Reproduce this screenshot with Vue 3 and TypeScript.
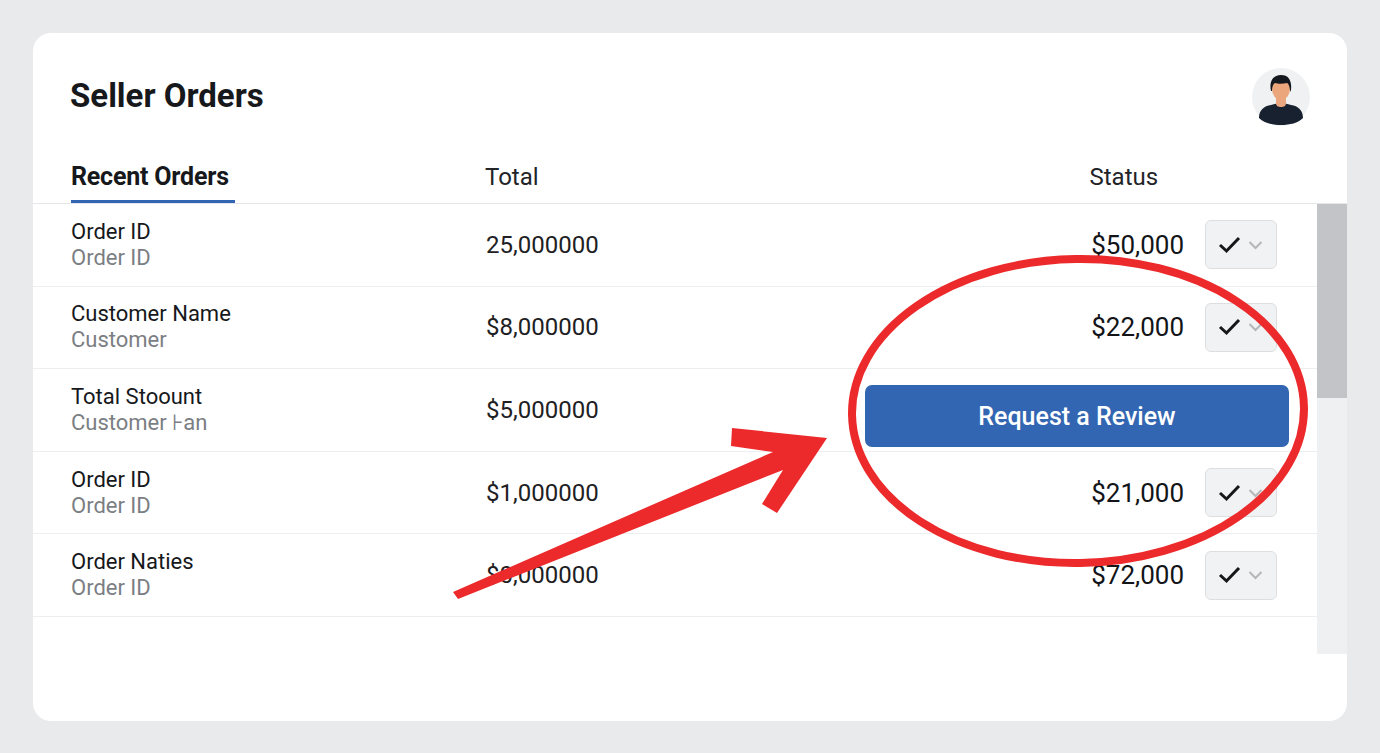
<script setup lang="ts">
interface Row { name: string; sub: string; total: string; amount?: string; cta?: boolean }
const rows: Row[] = [
  { name: 'Order ID', sub: 'Order ID', total: '25,000000', amount: '$50,000' },
  { name: 'Customer Name', sub: 'Customer', total: '$8,000000', amount: '$22,000' },
  { name: 'Total Stoount', sub: 'Customer ⊦an', total: '$5,000000', cta: true },
  { name: 'Order ID', sub: 'Order ID', total: '$1,000000', amount: '$21,000' },
  { name: 'Order Naties', sub: 'Order ID', total: '$0,000000', amount: '$72,000' },
]
</script>

<template>
  <div class="page">
    <main class="card">
      <header class="top">
        <h1>Seller Orders</h1>
        <svg class="avatar" viewBox="0 0 58 58" aria-hidden="true">
          <circle cx="29" cy="29" r="29" fill="#f0f1f2" />
          <path d="M7 50c0-8 5-12 12-13 4-1 6-2 10-2s6 1 10 2c7 1 12 5 12 13-5 5-13 7-22 7S12 55 7 50z" fill="#17212f" />
          <path d="M24 29h10v6c0 3-2 4-5 4s-5-1-5-4z" fill="#e9a67f" />
          <ellipse cx="29" cy="21" rx="9" ry="11" fill="#eba67c" />
          <path d="M19 23c-2-8 1-16 10-16 8 0 11 6 10 15l-1 2c0-4-1-8-3-9-4 1-9 1-12 0-2 1-3 4-3 8z" fill="#14181f" />
        </svg>
      </header>

      <div class="tabs">
        <div class="tab">Recent Orders</div>
        <div class="col">Total</div>
        <div class="col status">Status</div>
      </div>

      <div class="body">
        <div class="list">
          <div v-for="row in rows" :key="row.name + row.total" class="row">
            <div class="who">
              <div class="name">{{ row.name }}</div>
              <div class="sub">{{ row.sub }}</div>
            </div>
            <div class="total">{{ row.total }}</div>
            <button v-if="row.cta" class="cta" type="button">Request a Review</button>
            <div v-else class="end">
              <span class="amount">{{ row.amount }}</span>
              <span class="pick">
                <svg width="24" height="20" viewBox="0 0 24 20" aria-hidden="true"><path d="M2 10l6.500 6L21 3" fill="none" stroke="#15171a" stroke-width="3" /></svg>
                <svg width="15" height="10" viewBox="0 0 15 10" aria-hidden="true"><path d="M1.500 2l6 6 6-6" fill="none" stroke="#b4b6b8" stroke-width="2" /></svg>
              </span>
            </div>
          </div>
        </div>
        <div class="scroll"><div class="thumb"></div></div>
      </div>

      <svg class="mark" viewBox="0 0 1380 753" aria-hidden="true">
        <ellipse cx="1078" cy="411" rx="226" ry="152" fill="none" stroke="#ec2a2b" stroke-width="8" transform="rotate(-1 1078 411)" />
        <polygon points="453,592 773,452 731,446 732,428 827,438 777,513 762,504 783,470 458,599" fill="#ec2a2b" />
      </svg>
    </main>
  </div>
</template>

<style>
body { margin: 0; background: #e9eaec; }
</style>

<style scoped>
.page {
  box-sizing: border-box;
  height: 753px;
  padding: 33px;
  font-family: Roboto, "Liberation Sans", sans-serif;
  color: #16181b;
  overflow: hidden;
}
.card {
  position: relative;
  height: 688px;
  background: #fff;
  border-radius: 18px;
  overflow: hidden;
}
.top {
  display: flex;
  justify-content: space-between;
  align-items: center;
  height: 128px;
  padding: 0 37px 0 37px;
  box-sizing: border-box;
}
h1 { margin: 0; font-size: 33px; font-weight: 700; position: relative; top: -2px; }
.avatar { width: 58px; height: 58px; margin-right: 0; }
.tabs {
  display: grid;
  grid-template-columns: 414px 604.5px 1fr;
  height: 42px;
  padding-left: 38px;
  border-bottom: 1px solid #e4e6e9;
  font-size: 24px;
}
.tab {
  justify-self: start;
  font-weight: 700;
  line-height: 30px;
  padding-top: 1px;
  width: 164px;
  margin-left: 0;
  border-bottom: 3px solid #3366b2;
  height: 42px;
  box-sizing: border-box;
  font-size: 25px;
  letter-spacing: -0.2px;
}
.col { line-height: 32px; color: #222428; }
.body { display: flex; align-items: flex-start; }
.list { flex: 1; }
.row {
  box-sizing: border-box;
  height: 82.6px;
  display: grid;
  grid-template-columns: 415px 1fr auto;
  align-items: center;
  padding: 0 40px 0 38px;
  border-bottom: 1px solid #eceef0;
}
.name { font-size: 22px; line-height: 26px; color: #16181b; }
.sub { font-size: 22px; line-height: 26px; color: #7b7e83; }
.total { font-size: 24px; color: #1e2023; }
.end { display: flex; align-items: center; gap: 21px; }
.amount { font-size: 26px; color: #121417; }
.pick {
  box-sizing: border-box;
  width: 72px;
  height: 49px;
  display: flex;
  align-items: center;
  gap: 6px;
  padding-left: 12px;
  background: #f1f2f3;
  border: 1px solid #dcdee0;
  border-radius: 6px;
}
.cta {
  width: 424px;
  height: 62px;
  margin: 13px -12px 0 0;
  border: 0;
  border-radius: 7px;
  background: #3366b2;
  color: #fff;
  font: 500 25px Roboto, sans-serif;
}
.scroll { width: 30px; height: 450px; background: #eff0f1; }
.thumb { height: 194px; background: #c2c4c7; }
.mark { position: absolute; left: -33px; top: -33px; width: 1380px; height: 753px; pointer-events: none; }
</style>
